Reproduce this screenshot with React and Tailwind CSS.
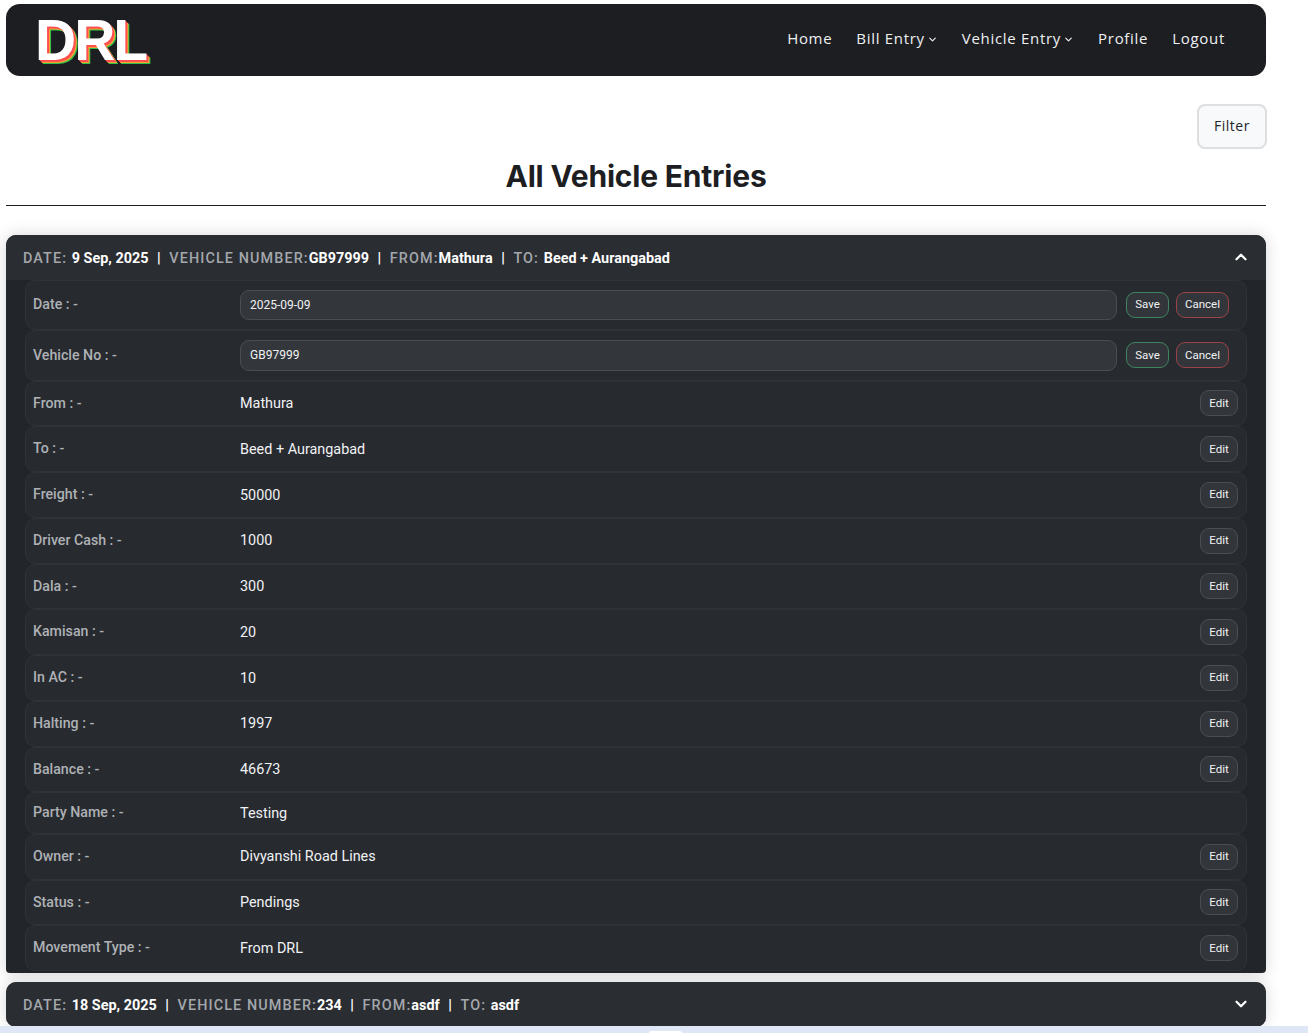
import React from "react";
import { ChevronDown, ChevronUp } from "lucide-react";

const rows = [
  ["From", "Mathura", true],
  ["To", "Beed + Aurangabad", true],
  ["Freight", "50000", true],
  ["Driver Cash", "1000", true],
  ["Dala", "300", true],
  ["Kamisan", "20", true],
  ["In AC", "10", true],
  ["Halting", "1997", true],
  ["Balance", "46673", true],
  ["Party Name", "Testing", false],
  ["Owner", "Divyanshi Road Lines", true],
  ["Status", "Pendings", true],
  ["Movement Type", "From DRL", true],
];

function Header({ date, num, from, to, open }) {
  const L = ({ children }) => <span className="text-[#a4a7ac] font-medium tracking-[1.1px]">{children}</span>;
  const V = ({ children }) => <span className="text-white font-bold">{children}</span>;
  const S = () => <span className="text-white font-bold mx-[8.6px]">|</span>;
  return (
    <div className="h-[45px] shrink-0 flex items-center justify-between pl-[17px] pr-[16px] pt-[2px] bg-[#2a2d32] text-[14.4px] rounded-t-[10px]">
      <div className="whitespace-pre">
        <L>DATE: </L><V>{date}</V><S /><L>VEHICLE NUMBER:</L><V>{num}</V><S /><L>FROM:</L><V>{from}</V><S /><L>TO: </L><V>{to}</V>
      </div>
      {open ? <ChevronUp size={18} strokeWidth={3} className="text-white -mt-[3px]" /> : <ChevronDown size={18} strokeWidth={3} className="text-white -mt-[3px]" />}
    </div>
  );
}

function Row({ label, className, children }) {
  return (
    <div className={`flex items-center pl-[7px] pr-[8px] border border-[#2f3237] bg-[#272a2f] rounded-[10px] ${className}`}>
      <div className="w-[207px] shrink-0 text-[#aeb1b5] text-[14.2px] font-medium">{label} : -</div>
      {children}
    </div>
  );
}

function Btn({ border, w, className = "", children }) {
  return (
    <button className={`h-[26px] ${w} flex items-center justify-center rounded-[9px] border ${border} bg-[#32353a] text-[#f1f2f4] text-[11.5px] font-normal ${className}`}>
      {children}
    </button>
  );
}

function EditRow({ label, value, h }) {
  return (
    <Row label={label} className={h}>
      <div className="flex-1 min-w-0 mr-[9px]">
        <div className="h-[30.5px] flex items-center pl-[9px] rounded-[9px] border border-[#4a4d53] bg-[#33363b] text-[#f1f2f4] text-[12px]">{value}</div>
      </div>
      <div className="flex gap-[7px] mr-[9px]">
        <Btn border="border-[#3f8660]" w="w-[43px]">Save</Btn>
        <Btn border="border-[#9a4448]" w="w-[53px]">Cancel</Btn>
      </div>
    </Row>
  );
}

export default function App() {
  return (
    <div className="relative w-[1308px] h-[1033px] overflow-hidden bg-white flex flex-col font-['Roboto',sans-serif]">
      <div className="flex-1 min-h-0 pl-[6px] pr-[42px] pt-[4px] flex flex-col">
        <nav className="h-[72px] shrink-0 flex items-center justify-between rounded-[14px] bg-[#1d1e22] pl-[29px] pr-[41px] font-['Open_Sans',sans-serif]">
          <span className="font-['Liberation_Sans',sans-serif] font-bold text-[57px] leading-none tracking-[-2px] text-white [text-shadow:1px_1px_0_#ff5050,2px_2px_0_#ff5050,3px_3px_0_#ffa033,4px_4px_0_#2fc24a]">
            DRL
          </span>
          <div className="flex items-center gap-[24px] text-[15px] text-[#eef0f2] tracking-[0.7px] -mt-[3px]">
            <span>Home</span>
            <span className="flex items-center gap-[2px]">Bill Entry <ChevronDown size={11} strokeWidth={2.5} className="mt-[2px]" /></span>
            <span className="flex items-center gap-[2px]">Vehicle Entry <ChevronDown size={11} strokeWidth={2.5} className="mt-[2px]" /></span>
            <span>Profile</span>
            <span>Logout</span>
          </div>
        </nav>

        <div className="flex justify-end mt-[28px] -mr-[1px]">
          <button className="w-[70px] h-[45px] pb-[2px] rounded-[8px] border-2 border-[#dedfe1] bg-[#f8f9fa] text-[14px] text-[#212529] tracking-[0.5px] font-['Open_Sans',sans-serif]">
            Filter
          </button>
        </div>

        <h1 className="h-[59px] shrink-0 -mt-[2px] border-b border-[#1d1e22] flex justify-center pt-[9px] text-[30px] leading-[40px] font-bold tracking-[-0.2px] text-[#1d1e22] font-['Inter',sans-serif]">
          All Vehicle Entries
        </h1>

        <section className="mt-[29px] h-[738px] shrink-0 flex flex-col rounded-t-[10px] rounded-b-[4px] bg-[#22252a] shadow-[0_0_16px_rgba(0,0,0,0.16)]">
          <Header date="9 Sep, 2025" num="GB97999" from="Mathura" to="Beed + Aurangabad" open />
          <div className="ml-[19px] mr-[19px] flex flex-col">
            <EditRow label="Date" value="2025-09-09" h="h-[50px]" />
            <EditRow label="Vehicle No" value="GB97999" h="h-[50.5px]" />
            {rows.map(([label, value, edit]) => (
              <Row key={label} label={label} className={edit ? "h-[45.75px]" : "h-[41.5px]"}>
                <span className="flex-1 mt-[1px] text-[#f1f2f4] text-[14.4px]">{value}</span>
                {edit && <Btn border="border-[#4a4d53]" w="w-[38px]">Edit</Btn>}
              </Row>
            ))}
          </div>
        </section>

        <section className="mt-[9px] shrink-0 rounded-[10px] overflow-hidden bg-[#2a2d32] shadow-[0_0_16px_rgba(0,0,0,0.16)]">
          <Header date="18 Sep, 2025" num="234" from="asdf" to="asdf" />
        </section>
      </div>

      <div className="h-[7px] shrink-0 bg-[#dfe6f5] flex justify-center items-end z-10">
        <div className="w-[33px] h-[2px] ml-[22px] bg-white rounded-t-[2px]" />
      </div>
    </div>
  );
}
